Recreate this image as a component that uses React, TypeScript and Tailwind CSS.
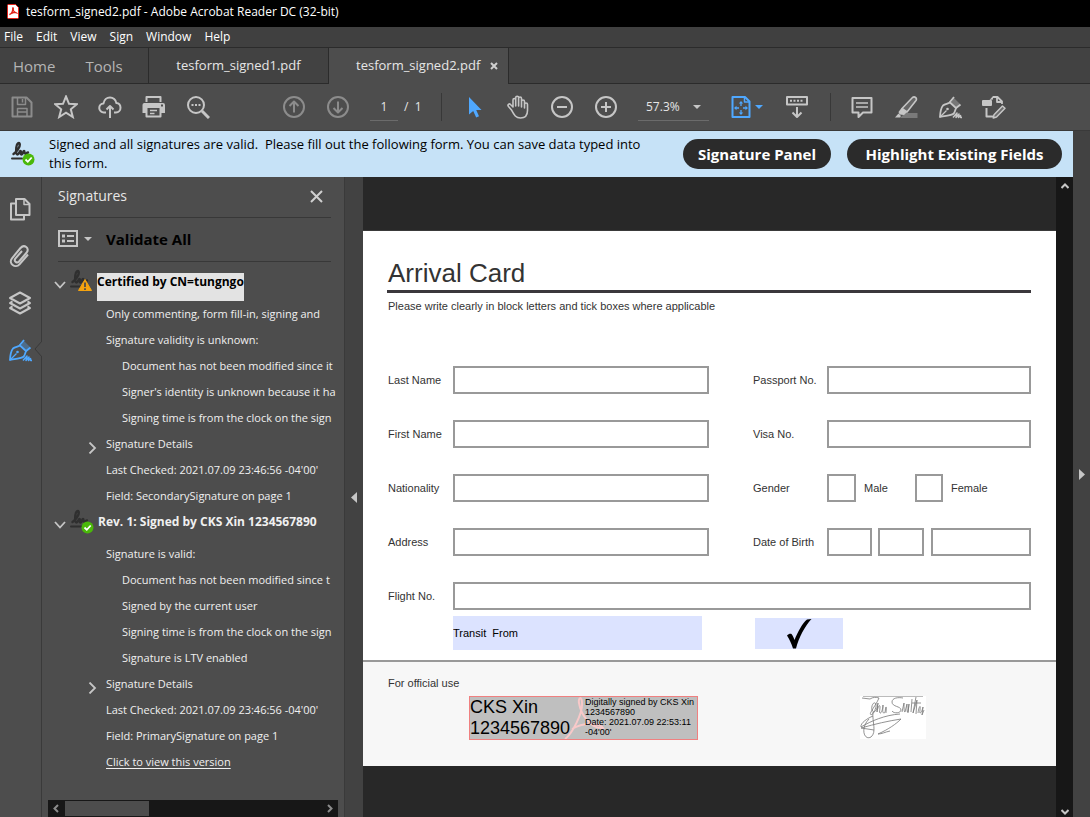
import type { ReactNode } from 'react'
import clsx from 'clsx'

type IconProps = { children: ReactNode; size?: number; className?: string }

const Icon = ({ children, size = 24, className }: IconProps) => (
  <svg
    width={size}
    height={size}
    viewBox="0 0 24 24"
    fill="none"
    stroke="currentColor"
    strokeWidth="2"
    strokeLinejoin="round"
    className={clsx('shrink-0', className)}
    aria-hidden="true"
  >
    {children}
  </svg>
)

const AcrobatLogo = () => (
  <svg width="12" height="15" viewBox="0 0 12 15" fill="none" aria-hidden="true">
    <path d="M1.500 0.500h7l3 3v10a1 1 0 0 1-1 1h-9a1 1 0 0 1-1-1v-12a1 1 0 0 1 1-1z" fill="#fff" stroke="#e2231a" />
    <path d="M2.500 10.500c2-.5 3.500-3.500 3.200-6C5.600 3.400 6.700 3.500 6.300 5c-.3 1.500 1 3.500 3.200 3.900C8.500 7.900 5 8.500 2.500 10.500z" stroke="#e2231a" strokeWidth="1.300" />
  </svg>
)

const SaveIcon = () => (
  <Icon>
    <path d="M2.500 2.500h14l5 5v14h-19z" />
    <path d="M7.500 3v6.500h8V3M12.500 4v3.500M7.500 21v-7.500h9.500V21M7.500 17h9" strokeWidth="1.500" />
  </Icon>
)

const StarIcon = () => (
  <Icon>
    <path d="M12 1.500l3 7.300 7.800.5-6 5 2 7.700-6.800-4.300-6.800 4.300 2-7.700-6-5 7.800-.5z" strokeLinejoin="miter" />
  </Icon>
)

const CloudIcon = () => (
  <Icon>
    <path d="M8 17.500H6a4.500 4.500 0 0 1-.5-9C6 4.500 9 2.500 12 2.500s6 2.200 6.300 5.500c2.700.3 4.200 2.300 4.200 4.700 0 2.800-2 4.800-4.500 4.800h-2" />
    <path d="M12 23V11M8.500 14.500L12 11l3.500 3.500" />
  </Icon>
)

const PrintIcon = () => (
  <Icon>
    <path d="M4.500 7V2h14v5" />
    <path d="M2 8h19a2 2 0 0 1 2 2v8h-5v-5H5v5H0.500v-8a2 2 0 0 1 1.500-2z" fill="currentColor" stroke="none" />
    <path d="M4.500 13v8.500h14V13" />
    <path d="M8 15.500h7M8 18.500h4.500" strokeWidth="1.300" />
    <rect x="19" y="9.500" width="2" height="2" fill="#4d4d4d" stroke="none" />
  </Icon>
)

const SearchIcon = () => (
  <Icon>
    <circle cx="10" cy="10" r="8" />
    <path d="M16 16l7 7" strokeWidth="3" />
    <path d="M5.500 10h2M9 10h2M12.500 10h2" />
  </Icon>
)

const ArrowCircle = ({ down = false }: { down?: boolean }) => (
  <Icon>
    <circle cx="12" cy="12" r="10" />
    {down ? <path d="M12 6.500v11M7.500 13l4.500 4.500 4.500-4.500" /> : <path d="M12 17.500v-11M7.500 11L12 6.500l4.500 4.500" />}
  </Icon>
)

const PointerIcon = () => (
  <Icon className="text-[#4fa8ff]">
    <path d="M7 2v17.500l4.200-3.500 3 6.500 2.800-1.200-2.800-6.300h5.300z" fill="currentColor" stroke="none" />
  </Icon>
)

const HandIcon = () => (
  <Icon>
    <path
      d="M5.500 15L2.500 11.500c-1.500-2 .8-3.300 2-2L7 12V5c0-2 2.700-2 2.700 0v6V2.800c0-2 2.900-2 2.900 0V11V3.500c0-2 2.900-2 2.900 0V12 6.500c0-2 3-2 3 0v6.500-3.500c0-2 3-2 3 0v6c0 4.500-2.500 7.500-7 7.500-4.800 0-6.300-3-9-8z"
      strokeWidth="1.600"
    />
  </Icon>
)

const ZoomCircle = ({ plus = false }: { plus?: boolean }) => (
  <Icon>
    <circle cx="12" cy="12" r="10" />
    <path d={plus ? 'M7 12h10M12 7v10' : 'M7 12h10'} />
  </Icon>
)

const FitIcon = () => (
  <Icon>
    <path d="M3.500 2h12.500l4.500 4.500V22h-17z" />
    <path d="M15.500 2v5h5" strokeWidth="1.500" />
    <path d="M12 8v3M12 15v3M7 13h3M14 13h3" strokeWidth="1.300" />
    <path d="M12 6l2.200 2.500H9.800zM12 20l2.200-2.500H9.800zM5 13l2.500-2.200v4.400zM19 13l-2.500-2.200v4.400z" fill="currentColor" stroke="none" />
  </Icon>
)

const ScrollPagesIcon = () => (
  <Icon>
    <rect x="2" y="2" width="20" height="7.500" />
    <path d="M5 5.700h2M8.500 5.700h2M12 5.700h2M15.500 5.700h2" strokeWidth="2" />
    <path d="M12 12v10M7.500 17.500L12 22l4.500-4.500" />
  </Icon>
)

const CommentIcon = () => (
  <Icon>
    <path d="M2.500 3h19v14.500H13L8.500 22v-4.500h-6z" />
    <path d="M6 8h12M6 12h12" strokeWidth="1.500" />
  </Icon>
)

const HighlighterIcon = () => (
  <Icon>
    <path d="M11 18h12.500v5H6z" fill="#7a7a7a" stroke="none" />
    <path d="M18.500 2.500c2-1.500 5 .5 3.500 3L13 17l-5-3.500z" fill="#666" strokeWidth="1.600" />
    <path d="M7.500 13l5.500 4-3 3-4.500-.5L4.500 17z" fill="currentColor" stroke="none" />
    <path d="M4.500 18.500L7 21l-1 1.500H1z" fill="currentColor" stroke="none" />
  </Icon>
)

const PenIcon = () => (
  <Icon>
    <path d="M15.500 2.500l6.500 6.500-3.500 3.500-5.500-5z" fill="currentColor" opacity="0.35" stroke="none" />
    <path d="M2 22C2.200 17 3 13 5 10.500c2-1.700 4.500-1.500 7-3l6 5.500c-1 2.500-1 4-2.500 5.800C12.500 21 7 20.500 2 22z" strokeWidth="1.800" />
    <path d="M11.500 7.500L16 2M17.500 13.500L22.500 9.500" strokeWidth="1.800" />
    <path d="M2 22l6.500-6.500" strokeWidth="1.300" />
    <circle cx="9.500" cy="14" r="1.300" fill="currentColor" stroke="none" />
    <path d="M15 22.500l4-4.500-1 4.500 3-3.500-.5 3.500 2-2 .2 2H24" strokeWidth="1.500" />
  </Icon>
)

const EditPageIcon = () => (
  <Icon>
    <path d="M11 2h4.500L20 6.500V9M15 2v5h5" strokeWidth="1.800" />
    <path d="M4.500 13v8.500H11" />
    <rect x="0" y="5" width="10" height="6" rx="1" fill="currentColor" stroke="none" />
    <path d="M11 1v3.500L7.500 5z" fill="currentColor" stroke="none" />
    <path d="M20.500 11l2.500 2.200-8.500 8.800-3.200 1 .7-3.300z" fill="#6b6b6b" strokeWidth="1.500" />
  </Icon>
)

const PagesIcon = () => (
  <Icon>
    <path d="M8 2h8.500L21.500 7v11H8z" />
    <path d="M16 2v5.500h5.500" strokeWidth="1.500" />
    <path d="M8 6.500H3V22.500h13V18" />
  </Icon>
)

const ClipIcon = () => (
  <Icon>
    <path d="M20 10.500l-8.500 9.800c-4.200 4.700-11.500-.8-7.500-6L12.500 4c3.800-4.300 9.500.2 6.200 4.500L11 17.500c-2.200 2.300-5.500-.3-3.700-2.900L14 7" />
  </Icon>
)

const LayersIcon = () => (
  <Icon>
    <path d="M12 1.500l10 5.500-10 5.500L2 7z" />
    <path d="M4.500 10.300L2 12l10 5.500L22 12l-2.500-1.700M4.500 15.300L2 17l10 5.500L22 17l-2.500-1.700" />
  </Icon>
)

const Scribble = () => (
  <g stroke="#2f2f2f" strokeLinecap="round">
    <path d="M2.500 13c3-2 6.500-6.500 6.300-9.500C8.600.5 5.500 2 5.300 6.500 5 11 5 13.500 6.500 13.500S8.500 10 9.500 10s-.5 3.500 1 3.500 1.500-3.500 2.500-3.500 0 3 1.500 3 1-1.500 2.500-1.500" strokeWidth="2.400" />
    <path d="M1 17.500h10" strokeWidth="2" />
  </g>
)

const SignedIcon = () => (
  <svg width="26" height="26" viewBox="0 0 26 26" fill="none" className="shrink-0" aria-hidden="true">
    <Scribble />
    <circle cx="17.500" cy="18.500" r="6" fill="#4ab80a" />
    <path d="M14.500 18.500l2.300 2.300 3.900-4.300" stroke="#fff" strokeWidth="1.800" />
  </svg>
)

const WarningIcon = () => (
  <svg width="26" height="26" viewBox="0 0 26 26" fill="none" className="shrink-0" aria-hidden="true">
    <Scribble />
    <path d="M15 10.500L21.500 21.500H8.500z" fill="#f5a30f" stroke="#f5a30f" strokeLinejoin="round" />
    <path d="M15 13.500v4.500M15 19.200v1.700" stroke="#4d4d4d" strokeWidth="1.800" />
  </svg>
)

const OptionsIcon = () => (
  <svg width="20" height="18" viewBox="0 0 20 18" fill="none" stroke="currentColor" aria-hidden="true">
    <rect x="1" y="1" width="18" height="15" strokeWidth="2" />
    <path d="M4 6h3M4 11h3" strokeWidth="3" />
    <path d="M9 6h7M9 11h7" strokeWidth="2" />
  </svg>
)

const Caret = ({ className }: { className?: string }) => (
  <svg width="8" height="4" viewBox="0 0 8 4" fill="currentColor" className={className} aria-hidden="true">
    <path d="M0 0h8L4 4z" />
  </svg>
)

const Chevron = ({ open = false }: { open?: boolean }) => (
  <svg width="12" height="12" viewBox="0 0 12 12" fill="none" stroke="currentColor" strokeWidth="1.800" aria-hidden="true">
    <path d={open ? 'M1 3l5 5.500L11 3' : 'M3.500 0.500L9 6l-5.500 5.500'} />
  </svg>
)

const ToolButton = ({ label, dim, children }: { label: string; dim?: boolean; children: ReactNode }) => (
  <button
    type="button"
    aria-label={label}
    className={clsx('flex h-11 w-11 items-center justify-center', dim ? 'text-[#8c8c8c]' : 'text-[#c6c6c6]')}
  >
    {children}
  </button>
)

const Toolbar = () => (
  <div className="flex h-[47px] items-center border-b border-[#3a3a3a] bg-[#4d4d4d]">
    <ToolButton label="Save" dim><SaveIcon /></ToolButton>
    <ToolButton label="Star"><StarIcon /></ToolButton>
    <ToolButton label="Upload"><CloudIcon /></ToolButton>
    <ToolButton label="Print"><PrintIcon /></ToolButton>
    <ToolButton label="Find"><SearchIcon /></ToolButton>
    <div className="ml-[52px] flex">
      <ToolButton label="Previous page" dim><ArrowCircle /></ToolButton>
      <ToolButton label="Next page" dim><ArrowCircle down /></ToolButton>
    </div>
    <input
      aria-label="Page number"
      defaultValue="1"
      className="ml-[10px] h-7 w-7 border-b border-[#6b6b6b] bg-transparent text-center text-xs text-[#e6e6e6] outline-none"
    />
    <span className="ml-[6px] w-[37px] whitespace-pre text-xs text-[#e6e6e6]">/  1</span>
    <div className="mr-[10px] h-7 w-px bg-[#383838]" />
    <ToolButton label="Select"><PointerIcon /></ToolButton>
    <ToolButton label="Hand"><HandIcon /></ToolButton>
    <ToolButton label="Zoom out"><ZoomCircle /></ToolButton>
    <ToolButton label="Zoom in"><ZoomCircle plus /></ToolButton>
    <div className="relative ml-[10px] text-[#c6c6c6]">
      <select
        aria-label="Zoom level"
        className="h-7 w-[71px] appearance-none border-b border-[#6b6b6b] bg-transparent pl-2 text-xs text-[#e6e6e6] outline-none"
      >
        <option>57.3%</option>
      </select>
      <Caret className="pointer-events-none absolute top-3 right-2" />
    </div>
    <button type="button" aria-label="Fit page" className="ml-5 flex h-11 items-center gap-[2px] text-[#4fa8ff]">
      <FitIcon />
      <Caret />
    </button>
    <div className="ml-3 flex">
      <ToolButton label="Scrolling"><ScrollPagesIcon /></ToolButton>
    </div>
    <div className="mr-[9px] ml-[11px] h-7 w-px bg-[#383838]" />
    <ToolButton label="Comment"><CommentIcon /></ToolButton>
    <ToolButton label="Highlight"><HighlighterIcon /></ToolButton>
    <ToolButton label="Sign"><PenIcon /></ToolButton>
    <ToolButton label="Edit"><EditPageIcon /></ToolButton>
  </div>
)

const Tabs = () => (
  <div className="flex h-9 bg-[#424242] text-[13px] text-[#e6e6e6]">
    <div className="flex w-[149px] gap-[30px] border-r border-b border-[#2b2b2b] pl-[13px] text-[15px] text-[#b5b5b5]">
      <button type="button">Home</button>
      <button type="button">Tools</button>
    </div>
    <button type="button" className="w-[180px] border-r border-b border-[#2b2b2b]">tesform_signed1.pdf</button>
    <div className="flex w-[180px] items-center gap-[10px] border-r border-[#2b2b2b] bg-[#4d4d4d] pl-[27px]">
      <button type="button">tesform_signed2.pdf</button>
      <button type="button" aria-label="Close tab">
        <svg width="8" height="8" viewBox="0 0 8 8" stroke="#d0d0d0" strokeWidth="2" aria-hidden="true">
          <path d="M1 1l6 6M7 1L1 7" />
        </svg>
      </button>
    </div>
    <div className="flex-1 border-b border-[#2b2b2b]" />
  </div>
)

const MessageBar = () => (
  <div className="flex h-[46px] shrink-0 items-center bg-[#c6e2f7] pr-[11px] pl-[11px] text-black">
    <SignedIcon />
    <p className="ml-3 w-[608px] text-[13px] leading-[19px]">
      Signed and all signatures are valid.&nbsp; Please fill out the following form. You can save data typed into this form.
    </p>
    <div className="ml-auto flex shrink-0 gap-4 text-[15px] font-bold text-white">
      <button type="button" className="h-[30px] w-[148px] rounded-full bg-[#2b2b2b]">Signature Panel</button>
      <button type="button" className="h-[30px] w-[215px] rounded-full bg-[#2b2b2b]">Highlight Existing Fields</button>
    </div>
  </div>
)

const NavRail = () => (
  <nav className="relative flex w-[42px] shrink-0 flex-col items-center gap-[23px] border-r border-[#3a3a3a] pt-5 pr-[2px] text-[#c6c6c6]">
    <button type="button" aria-label="Page thumbnails"><PagesIcon /></button>
    <button type="button" aria-label="Attachments"><ClipIcon /></button>
    <button type="button" aria-label="Layers"><LayersIcon /></button>
    <button type="button" aria-label="Signatures" className="text-[#4fa8ff]"><PenIcon /></button>
    <svg width="8" height="16" viewBox="0 0 8 16" className="absolute top-[164px] -right-px" aria-hidden="true">
      <path d="M8 0L1 8l7 8" fill="#4d4d4d" stroke="#3a3a3a" />
    </svg>
  </nav>
)

type Line = { text: string; level?: number; expandable?: boolean; link?: boolean }
type Signature = { title: string; selected?: boolean; lines: Line[] }

const signatures: Signature[] = [
  {
    title: 'Certified by CN=tungngo',
    selected: true,
    lines: [
      { text: 'Only commenting, form fill-in, signing and' },
      { text: 'Signature validity is unknown:' },
      { text: 'Document has not been modified since it', level: 1 },
      { text: "Signer's identity is unknown because it ha", level: 1 },
      { text: 'Signing time is from the clock on the sign', level: 1 },
      { text: 'Signature Details', expandable: true },
      { text: "Last Checked: 2021.07.09 23:46:56 -04'00'" },
      { text: 'Field: SecondarySignature on page 1' }
    ]
  },
  {
    title: 'Rev. 1: Signed by CKS Xin 1234567890',
    lines: [
      { text: 'Signature is valid:' },
      { text: 'Document has not been modified since t', level: 1 },
      { text: 'Signed by the current user', level: 1 },
      { text: 'Signing time is from the clock on the sign', level: 1 },
      { text: 'Signature is LTV enabled', level: 1 },
      { text: 'Signature Details', expandable: true },
      { text: "Last Checked: 2021.07.09 23:46:56 -04'00'" },
      { text: 'Field: PrimarySignature on page 1' },
      { text: 'Click to view this version', link: true }
    ]
  }
]

const SignatureTree = () => (
  <div className="mr-[6px] ml-3 min-h-0 flex-1 overflow-hidden pt-[7px] text-[11px] whitespace-nowrap text-[#f0f0f0]">
    {signatures.map(({ title, selected, lines }) => (
      <section key={title}>
        <div className="flex h-8">
          <button type="button" aria-label="Collapse" className="mr-1 text-[#c6c6c6]"><Chevron open /></button>
          {selected ? <WarningIcon /> : <SignedIcon />}
          <h3
            className={clsx(
              'text-xs font-bold',
              selected ? 'mt-1 ml-px h-7 bg-[#e3e3e3] leading-[18px] text-black' : 'ml-[2px] leading-[26px]'
            )}
          >
            {title}
          </h3>
        </div>
        <ul>
          {lines.map(({ text, level, expandable, link }) => (
            <li key={text} className={clsx('flex h-[26px] items-center', level ? 'pl-[68px]' : expandable ? 'pl-8' : 'pl-[52px]')}>
              {expandable && (
                <button type="button" aria-label="Expand" className="mt-2 mr-2 text-[#c6c6c6]"><Chevron /></button>
              )}
              {link ? <a href="#version" className="underline underline-offset-2">{text}</a> : text}
            </li>
          ))}
        </ul>
      </section>
    ))}
  </div>
)

const SignaturesPanel = () => (
  <aside className="flex w-[303px] shrink-0 flex-col border-r border-[#3a3a3a]">
    <div className="mr-[13px] ml-4 flex h-[41px] items-center justify-between border-b border-[#383838] pr-2 pb-[2px]">
      <h2 className="text-sm text-[#e6e6e6]">Signatures</h2>
      <button type="button" aria-label="Close panel">
        <svg width="13" height="13" viewBox="0 0 13 13" stroke="#d0d0d0" strokeWidth="2" aria-hidden="true">
          <path d="M1 1l11 11M12 1L1 12" />
        </svg>
      </button>
    </div>
    <div className="mr-[13px] ml-4 flex h-11 items-center border-b border-[#383838] pb-px">
      <button type="button" aria-label="Options" className="flex w-12 items-center gap-[6px] text-[#c6c6c6]">
        <OptionsIcon />
        <Caret />
      </button>
      <button type="button" className="text-[15px] font-bold text-black">Validate All</button>
    </div>
    <SignatureTree />
    <div className="mr-[6px] ml-[6px] flex h-[17px] items-center bg-[#171717] text-[#8c8c8c]">
      <svg width="17" height="17" viewBox="0 0 17 17" fill="none" stroke="currentColor" strokeWidth="2" aria-hidden="true">
        <path d="M10 5L6.500 8.500 10 12" />
      </svg>
      <div className="h-[15px] w-[84px] bg-[#4d4d4d]" />
      <svg width="17" height="17" viewBox="0 0 17 17" fill="none" stroke="currentColor" strokeWidth="2" className="ml-auto" aria-hidden="true">
        <path d="M7 5l3.500 3.500L7 12" />
      </svg>
    </div>
  </aside>
)

const fieldBox = 'h-7 min-w-0 border-2 border-[#999] bg-white outline-none'

const Field = ({ id, label, wide }: { id: string; label: string; wide?: boolean }) => (
  <>
    <label htmlFor={id}>{label}</label>
    <input id={id} className={clsx(fieldBox, 'w-full', wide && 'col-span-4')} />
  </>
)

const HandSignature = () => (
  <svg width="66" height="43" viewBox="0 0 66 43" fill="none" stroke="#777" strokeWidth="0.800" className="bg-white" aria-hidden="true">
    <path d="M3 0.500h60" stroke="#aaa" />
    <path d="M2 2l8 1M10 3c3-2 6-2 9-1-2 5-6 10-8 14-2 3 1 4 3 0s3-8 1-9-4 4-3 7 4 2 5-2l1-5-1 9c1-6 3-8 3-5s-1 5 0 6 3-4 3-8c0 4-1 8 1 8s1-6 2-6 0 4 0 6" />
    <path d="M43 2c-5-1-11 0-11 4 0 5 9 4 9 8 0 3-7 4-9 1M42 16l2-9c0 5 0 9 1 9l2-8c0 5 0 9 1 8l1-8-1 9M51 16l1-13M56 1l-3 16 4-13-1 14M52 7h9M58 17c1-7 3-9 2-3s2 2 3-3l-1 8 2-5" />
    <path d="M13 16C12 26 17 36 11 41c-7 4-11-9-2-18M1 31c10-6 24-12 39-13M1 31c-1-4 7-9 12-11M1 32c14-4 27-7 40-9-5 5-12 10-23 15M18 38c4 0 7-2 12-3M1 32l13 2" />
  </svg>
)

const ArrivalCard = () => (
  <form className="border-t border-[#3a3a3a] bg-white text-[11px] text-[#333] [font-family:'Liberation_Sans',Arial,sans-serif]">
    <div className="h-[429px] px-[25px] pt-[27px]">
      <h1 className="-ml-px border-b-[3px] border-[#3b383c] pb-[2px] pl-px text-[26px] leading-[30px]">Arrival Card</h1>
      <p className="mt-[5px] leading-4">Please write clearly in block letters and tick boxes where applicable</p>
      <div className="mt-[52px] grid grid-cols-[65px_256fr_44px_74px_204fr] items-center gap-y-[26px]">
        <Field id="last" label="Last Name" />
        <span />
        <Field id="passport" label="Passport No." />
        <Field id="first" label="First Name" />
        <span />
        <Field id="visa" label="Visa No." />
        <Field id="nationality" label="Nationality" />
        <span />
        <span>Gender</span>
        <div className="flex min-w-0 items-center">
          <input type="checkbox" id="male" className={clsx(fieldBox, 'w-[29px] appearance-none')} />
          <label htmlFor="male" className="ml-2 w-[51px]">Male</label>
          <input type="checkbox" id="female" className={clsx(fieldBox, 'w-7 appearance-none')} />
          <label htmlFor="female" className="ml-2">Female</label>
        </div>
        <Field id="address" label="Address" />
        <span />
        <label htmlFor="day">Date of Birth</label>
        <div className="flex min-w-0 gap-[6px]">
          <input id="day" className={clsx(fieldBox, 'w-[45px]')} />
          <input aria-label="Month" className={clsx(fieldBox, 'w-[46px]')} />
          <input aria-label="Year" className={clsx(fieldBox, 'ml-px flex-1')} />
        </div>
        <Field id="flight" label="Flight No." wide />
      </div>
      <div className="mt-[6px] ml-[65px] flex items-center text-black">
        <input aria-label="Transit" defaultValue="Transit  From" className="h-[34px] w-[249px] bg-[#dce3ff] outline-none" />
        <label className="relative ml-[53px] flex h-[31px] w-[88px] items-center justify-center bg-[#dce3ff]">
          <input type="checkbox" defaultChecked aria-label="In transit" className="absolute inset-0 appearance-none" />
          <svg width="25" height="31" viewBox="0 0 25 31" aria-hidden="true">
            <path d="M0 17.500C1.500 16 3 15.500 4.500 16c1.300 1.500 2.200 3.800 3 6C11 13.500 15.500 5 20 1.500L24.500 1C18 8 12 19 9 30.500H6C4.500 26 2.500 21 0 17.500z" />
          </svg>
        </label>
      </div>
    </div>
    <div className="h-[106px] border-t-2 border-[#999] bg-[#f7f7f7] px-[25px] pt-[13px]">
      <p className="leading-4">For official use</p>
      <div className="mt-[5px] flex pl-[81px]">
        <button
          type="button"
          aria-label="Signature"
          className="relative flex h-11 w-[229px] border border-[#f08080] bg-[#bfbfbf] text-left text-black"
        >
          <svg width="42" height="42" viewBox="0 0 42 42" fill="none" stroke="#f8c9c9" strokeWidth="2" className="absolute top-0 left-[94px]" aria-hidden="true">
            <path d="M1 42C8 37 19 16 18 6c0-7-4-6-3 0 2 12 12 26 24 25-3-5-20-6-31 1" />
          </svg>
          <span className="relative w-[115px] text-lg leading-[21px]">CKS Xin 1234567890</span>
          <span className="relative text-[9px] leading-[10px]">
            Digitally signed by CKS Xin
            <br />
            1234567890
            <br />
            Date: 2021.07.09 22:53:11
            <br />
            -04'00'
          </span>
        </button>
        <div className="ml-[162px]"><HandSignature /></div>
      </div>
    </div>
  </form>
)

const DocumentView = () => (
  <main className="flex min-w-0 flex-1 bg-[#282828]">
    <div className="min-w-0 flex-1 pt-[53px]">
      <ArrivalCard />
    </div>
    <div className="flex w-[17px] flex-col items-center justify-between bg-[#171717] py-[6px] text-[#c6c6c6]">
      <svg width="8" height="6" viewBox="0 0 8 6" fill="none" stroke="currentColor" strokeWidth="2" aria-hidden="true">
        <path d="M0.500 5L4 1.500 7.500 5" />
      </svg>
      <svg width="8" height="6" viewBox="0 0 8 6" fill="none" stroke="currentColor" strokeWidth="2" className="-mb-1" aria-hidden="true">
        <path d="M0.500 1L4 4.500 7.500 1" />
      </svg>
    </div>
  </main>
)

const App = () => (
  <div className="flex h-screen flex-col overflow-hidden bg-[#4d4d4d] [font-family:'Open_Sans','Noto_Sans',sans-serif]">
    <header className="shrink-0 text-xs text-white">
      <div className="flex h-[27px] items-center gap-[7px] bg-black pb-1 pl-[7px]">
        <AcrobatLogo />
        <span>tesform_signed2.pdf - Adobe Acrobat Reader DC (32-bit)</span>
      </div>
      <div className="flex h-[21px] items-center gap-[13px] border-b border-[#2b2b2b] bg-[#404040] pl-1">
        {['File', 'Edit', 'View', 'Sign', 'Window', 'Help'].map((item) => (
          <button type="button" key={item}>{item}</button>
        ))}
      </div>
      <Tabs />
      <Toolbar />
    </header>
    <div className="flex min-h-0 flex-1">
      <div className="flex min-w-0 flex-1 flex-col">
        <MessageBar />
        <div className="flex min-h-0 flex-1">
          <NavRail />
          <SignaturesPanel />
          <button type="button" aria-label="Hide panel" className="flex w-[18px] shrink-0 items-center justify-center bg-[#424242]">
            <svg width="6" height="11" viewBox="0 0 6 11" fill="#c6c6c6" aria-hidden="true"><path d="M6 0v11L0 5.500z" /></svg>
          </button>
          <DocumentView />
        </div>
      </div>
      <button type="button" aria-label="Show tools" className="flex w-[17px] shrink-0 items-center justify-center bg-[#424242]">
        <svg width="6" height="11" viewBox="0 0 6 11" fill="#c6c6c6" aria-hidden="true"><path d="M0 0v11l6-5.500z" /></svg>
      </button>
    </div>
  </div>
)

export default App
